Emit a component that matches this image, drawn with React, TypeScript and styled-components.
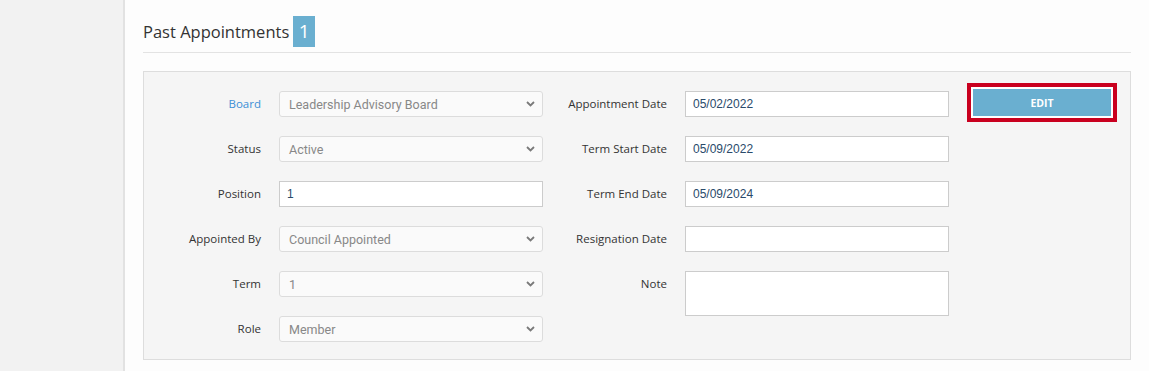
import React from 'react';
import styled, { createGlobalStyle } from 'styled-components';

const GlobalStyle = createGlobalStyle`
  html, body {
    margin: 0;
    padding: 0;
    background: #fdfdfd;
  }
  * {
    box-sizing: border-box;
  }
`;

type Field = {
  label: string;
  kind: 'select' | 'input' | 'textarea';
  value?: string;
  link?: boolean;
};

const leftFields: Field[] = [
  { label: 'Board', kind: 'select', value: 'Leadership Advisory Board', link: true },
  { label: 'Status', kind: 'select', value: 'Active' },
  { label: 'Position', kind: 'input', value: '1' },
  { label: 'Appointed By', kind: 'select', value: 'Council Appointed' },
  { label: 'Term', kind: 'select', value: '1' },
  { label: 'Role', kind: 'select', value: 'Member' },
];

const rightFields: Field[] = [
  { label: 'Appointment Date', kind: 'input', value: '05/02/2022' },
  { label: 'Term Start Date', kind: 'input', value: '05/09/2022' },
  { label: 'Term End Date', kind: 'input', value: '05/09/2024' },
  { label: 'Resignation Date', kind: 'input', value: '' },
  { label: 'Note', kind: 'textarea', value: '' },
];

function Chevron() {
  return (
    <svg width='9' height='6' viewBox='0 0 9 6'>
      <path d='M1 1 L4.5 4.5 L8 1' fill='none' stroke='#7a7a7a' strokeWidth='1.8' />
    </svg>
  );
}

function FieldControl({ field }: { field: Field }) {
  if (field.kind === 'select') {
    return (
      <StyledSelect>
        <span>{field.value}</span>
        <Chevron />
      </StyledSelect>
    );
  }
  if (field.kind === 'textarea') {
    return <StyledTextarea defaultValue={field.value} />;
  }
  return <StyledInput defaultValue={field.value} readOnly />;
}

function FieldColumn({ fields, labelWidth }: { fields: Field[]; labelWidth: number }) {
  return (
    <StyledColumn>
      {fields.map((field) => (
        <StyledFieldRow key={field.label} $labelWidth={labelWidth}>
          <StyledLabel $link={field.link}>{field.label}</StyledLabel>
          <FieldControl field={field} />
        </StyledFieldRow>
      ))}
    </StyledColumn>
  );
}

export default function App() {
  return (
    <>
      <GlobalStyle />
      <StyledPage>
        <StyledSidebar />
        <StyledMain>
          <StyledHeader>
            <StyledTitle>Past Appointments</StyledTitle>
            <StyledBadge>1</StyledBadge>
          </StyledHeader>
          <StyledPanel>
            <FieldColumn fields={leftFields} labelWidth={117} />
            <FieldColumn fields={rightFields} labelWidth={124} />
            <StyledEditButton>EDIT</StyledEditButton>
          </StyledPanel>
        </StyledMain>
      </StyledPage>
    </>
  );
}

const StyledPage = styled.div`
  display: flex;
  height: 371px;
  overflow: hidden;
`;

const StyledSidebar = styled.div`
  width: 125px;
  flex-shrink: 0;
  background-color: #f2f2f2;
  border-right: 2px solid #e2e2e2;
`;

const StyledMain = styled.div`
  flex: 1;
  padding: 15px 18px 0 18px;
  background-color: #fdfdfd;
`;

const StyledHeader = styled.div`
  display: flex;
  align-items: center;
  gap: 4px;
  padding-bottom: 5px;
  border-bottom: 1px solid #e3e3e3;
`;

const StyledTitle = styled.h2`
  margin: 0;
  font-family: 'Open Sans', sans-serif;
  font-size: 16.5px;
  font-weight: 400;
  color: #333;
  line-height: 31px;
  padding-top: 1px;
`;

const StyledBadge = styled.span`
  display: inline-flex;
  align-items: center;
  justify-content: center;
  width: 22px;
  height: 31px;
  background-color: #6aafd0;
  color: #fff;
  font-family: 'Open Sans', sans-serif;
  font-size: 19px;
`;

const StyledPanel = styled.div`
  margin-top: 18px;
  display: flex;
  align-items: flex-start;
  padding: 19px 0 17px 0;
  background-color: #f5f5f5;
  border: 1px solid #dddddd;
`;

const StyledColumn = styled.div`
  display: flex;
  flex-direction: column;
  gap: 19px;
`;

const StyledFieldRow = styled.div<{ $labelWidth: number }>`
  display: grid;
  grid-template-columns: ${({ $labelWidth }) => $labelWidth}px 264px;
  column-gap: 18px;
  align-items: start;
`;

const StyledLabel = styled.label<{ $link?: boolean }>`
  text-align: right;
  font-family: 'Open Sans', sans-serif;
  font-size: 11.5px;
  line-height: 26px;
  color: ${({ $link }) => ($link ? '#3b8fd6' : '#333')};
`;

const StyledSelect = styled.div`
  display: flex;
  align-items: center;
  justify-content: space-between;
  height: 26px;
  padding: 0 7px 0 9px;
  background-color: #fafafa;
  border: 1px solid #dcdcdc;
  border-radius: 3px;
  font-family: Roboto, 'Liberation Sans', sans-serif;
  font-size: 12.5px;
  color: #888;
`;

const StyledInput = styled.input`
  height: 26px;
  width: 100%;
  padding: 0 7px;
  background-color: #fff;
  border: 1px solid #cccccc;
  border-radius: 0;
  font-family: 'Liberation Sans', Arial, sans-serif;
  font-size: 12px;
  color: #2a4a6a;
  outline: none;
`;

const StyledTextarea = styled.textarea`
  height: 45px;
  width: 100%;
  resize: none;
  background-color: #fff;
  border: 1px solid #cccccc;
  outline: none;
  font-family: 'Liberation Sans', Arial, sans-serif;
  font-size: 12px;
`;

const StyledEditButton = styled.button`
  margin: -4px 0 0 22px;
  width: 142px;
  height: 31px;
  background-color: #6aafd0;
  border: 2px solid #fff;
  outline: 4px solid #c9001f;
  color: #fff;
  font-family: 'Open Sans', sans-serif;
  font-size: 10.5px;
  font-weight: 700;
  cursor: pointer;
`;
